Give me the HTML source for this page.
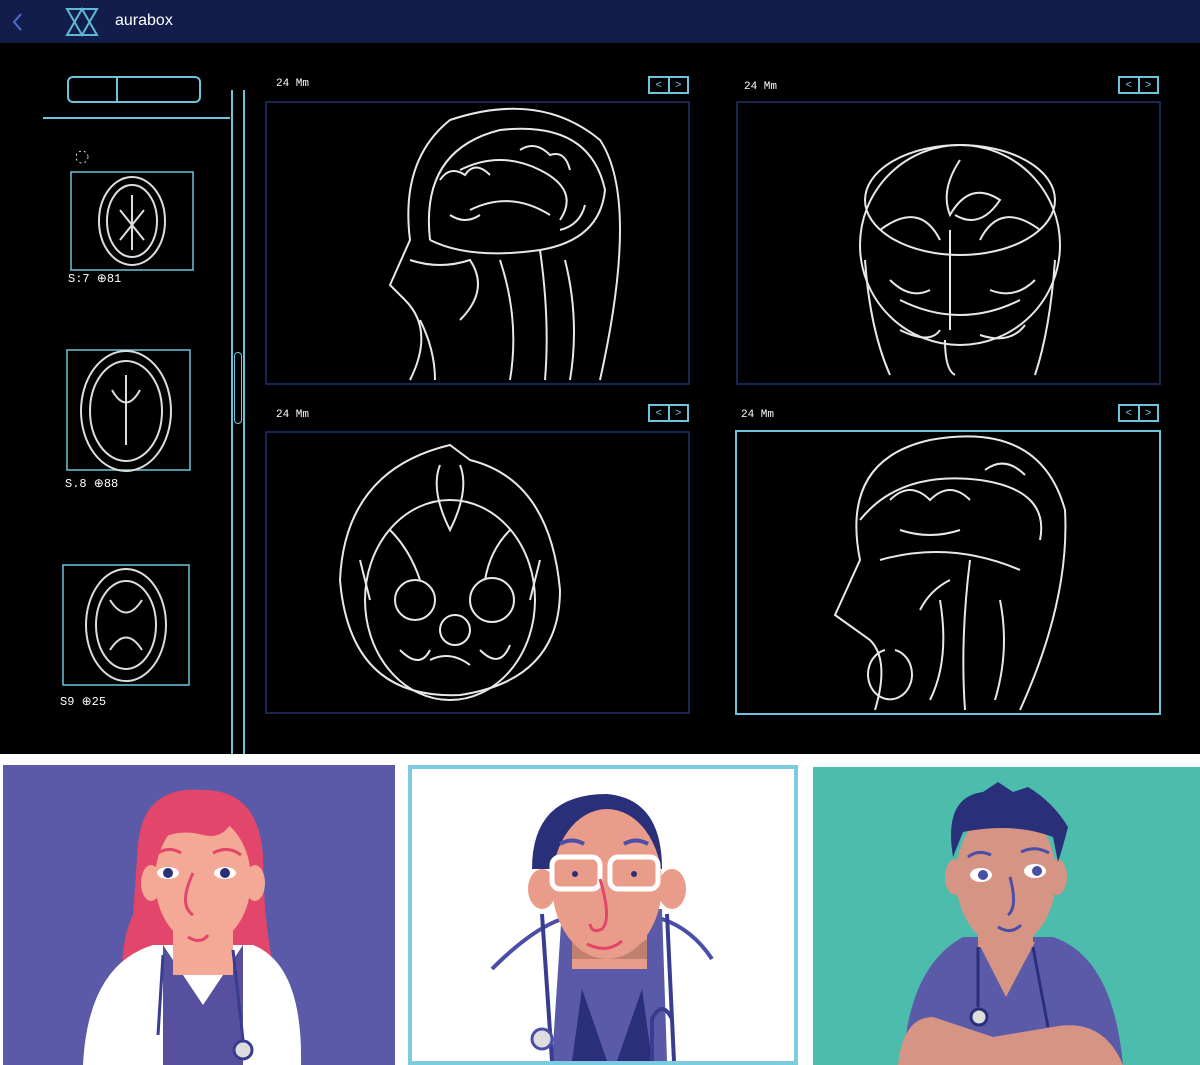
<!DOCTYPE html>
<html><head><meta charset="utf-8"><style>
*{margin:0;padding:0;box-sizing:border-box}
body{width:1200px;height:1065px;background:#fff;position:relative;overflow:hidden;font-family:"Liberation Sans",sans-serif}
.hdr{position:absolute;left:0;top:0;width:1200px;height:43px;background:#121d4c}
.dark{position:absolute;left:0;top:43px;width:1200px;height:711px;background:#000}
.abs{position:absolute}
.frame{position:absolute;border:2px solid #1a2550}
.lbl{position:absolute;color:#fff;font-size:11px;font-family:"Liberation Mono",monospace}
.nav{position:absolute;width:41px;height:18px;border:2px solid #6ec4dc;display:flex}
.nav span{flex:1;color:#6ec4dc;font-size:11px;line-height:14px;text-align:center}
.nav span:first-child{border-right:2px solid #6ec4dc}
</style></head><body>
<div class="hdr">
<svg class="abs" style="left:10px;top:11px" width="14" height="22"><path d="M11 3 L4 11 L11 19" stroke="#4a6fd0" stroke-width="2" fill="none"/></svg>
<svg class="abs" style="left:64px;top:7px" width="36" height="30"><g stroke="#5fb8d6" stroke-width="2" fill="none"><path d="M3 2 H33 L18 28 Z"/><path d="M3 28 H33 L18 2 Z"/></g></svg>
<div class="abs" style="left:115px;top:12px;color:#fff;font-size:16px">aurabox</div>
</div>
<div class="dark"></div>
<!-- sidebar -->
<div class="abs" style="left:67px;top:76px;width:134px;height:27px;border:2px solid #6ec4dc;border-radius:6px"></div>
<div class="abs" style="left:116px;top:76px;width:2px;height:27px;background:#6ec4dc"></div>
<div class="abs" style="left:43px;top:117px;width:187px;height:2px;background:#6ec4dc"></div>
<div class="abs" style="left:231px;top:90px;width:2px;height:664px;background:#6ec4dc"></div>
<div class="abs" style="left:243px;top:90px;width:2px;height:664px;background:#6ec4dc"></div>
<div class="abs" style="left:234px;top:352px;width:8px;height:72px;border:1px solid #6ec4dc;border-radius:4px"></div>
<svg class="abs" style="left:60px;top:145px" width="150" height="570"><g fill="none" stroke="#6ec4dc" stroke-width="1.5">
<rect x="11" y="27" width="122" height="98"/><rect x="7" y="205" width="123" height="120"/><rect x="3" y="420" width="126" height="120"/></g>
<g fill="none" stroke="#ddd" stroke-width="2">
<ellipse cx="72" cy="76" rx="33" ry="44"/><ellipse cx="72" cy="76" rx="25" ry="36"/><path d="M72 50 V105 M60 65 L84 95 M84 65 L60 95"/>
<ellipse cx="66" cy="266" rx="45" ry="60"/><ellipse cx="66" cy="266" rx="36" ry="50"/><path d="M66 230 V300 M52 245 Q66 270 80 245"/>
<ellipse cx="66" cy="480" rx="40" ry="56"/><ellipse cx="66" cy="480" rx="30" ry="44"/><path d="M50 455 Q66 480 82 455 M50 505 Q66 480 82 505"/>
</g>
<text x="8" y="137" fill="#fff" font-size="12" font-family="Liberation Mono">S:7 ⊕81</text>
<text x="5" y="342" fill="#fff" font-size="12" font-family="Liberation Mono">S.8 ⊕88</text>
<text x="0" y="560" fill="#fff" font-size="12" font-family="Liberation Mono">S9 ⊕25</text>
<circle cx="22" cy="12" r="6" fill="none" stroke="#ddd" stroke-dasharray="2 3"/>
</svg>
<!-- frames -->
<div class="lbl" style="left:276px;top:78px">24 Mm</div><div class="nav" style="left:648px;top:76px"><span>&lt;</span><span>&gt;</span></div>
<div class="lbl" style="left:744px;top:81px">24 Mm</div><div class="nav" style="left:1118px;top:76px"><span>&lt;</span><span>&gt;</span></div>
<div class="lbl" style="left:276px;top:409px">24 Mm</div><div class="nav" style="left:648px;top:404px"><span>&lt;</span><span>&gt;</span></div>
<div class="lbl" style="left:741px;top:409px">24 Mm</div><div class="nav" style="left:1118px;top:404px"><span>&lt;</span><span>&gt;</span></div>
<div class="frame" style="left:265px;top:101px;width:425px;height:284px"></div>
<div class="frame" style="left:736px;top:101px;width:425px;height:284px"></div>
<div class="frame" style="left:265px;top:431px;width:425px;height:283px"></div>
<div class="frame" style="left:735px;top:430px;width:426px;height:285px;border-color:#6ec4dc"></div>
<svg class="abs" style="left:0;top:0" width="1200" height="754"><g fill="none" stroke="#e8e8e8" stroke-width="2">
<path d="M410 380 Q435 330 405 300 L390 285 L410 240 Q400 160 450 120 Q540 90 600 140 Q640 200 600 380"/>
<path d="M430 240 Q420 150 500 130 Q590 120 605 190 Q600 240 540 250 Q470 260 430 240"/>
<path d="M460 170 Q500 150 540 170 Q580 190 560 220 M470 210 Q510 190 550 215 M500 260 Q520 320 510 380 M540 250 Q550 320 545 380"/>
<path d="M440 180 q10 -15 25 -5 q10 -15 25 0 M520 150 q15 -10 30 5 q15 -5 20 15 M450 215 q15 10 30 0 M560 230 q20 -5 25 -25 M410 260 q30 10 60 0 q20 30 -10 60 M420 320 q15 30 15 60 M565 260 q15 60 5 120"/>
<ellipse cx="960" cy="245" rx="100" ry="100"/><path d="M865 260 Q870 330 890 375 M1055 260 Q1050 330 1035 375 M960 160 Q940 190 950 215 Q970 180 1000 200 Q980 230 955 215 M950 230 V330 M900 300 Q960 330 1020 300 M880 230 Q920 200 940 240 M1040 230 Q1000 200 980 240"/>
<ellipse cx="960" cy="200" rx="95" ry="55"/>
<path d="M890 280 q20 20 40 10 M990 290 q25 10 45 -10 M900 330 q30 15 40 0 M980 335 q30 10 45 -10 M945 340 q0 30 10 35"/>
<path d="M450 445 L470 460 Q550 480 560 590 Q560 680 460 695 Q350 700 340 580 Q345 470 450 445 Z"/>
<ellipse cx="450" cy="600" rx="85" ry="100"/>
<path d="M440 465 Q430 490 450 530 Q470 490 460 465 M395 600 a20 20 0 1 0 40 0 a20 20 0 1 0 -40 0 M470 600 a22 22 0 1 0 44 0 a22 22 0 1 0 -44 0 M440 630 a15 15 0 1 0 30 0 a15 15 0 1 0 -30 0 M430 660 Q450 650 470 665"/>
<path d="M390 530 q20 20 30 50 M510 530 q-20 20 -25 50 M400 650 q20 20 30 0 M480 650 q20 20 30 -5 M360 560 l10 40 M540 560 l-10 40"/>
<path d="M875 710 Q890 660 870 640 L835 615 L860 560 Q840 460 930 440 Q1040 420 1065 510 Q1070 600 1020 710"/>
<path d="M860 520 Q900 470 980 480 Q1050 490 1040 540 M880 560 Q950 540 1020 570 M970 560 Q960 640 965 710 M940 600 Q950 660 930 700 M885 650 a22 25 0 1 0 10 0"/>
<path d="M890 500 q20 -20 40 0 q20 -20 40 0 M985 470 q20 -15 40 5 M900 530 q30 10 60 0 M1000 600 q10 50 -5 100 M950 580 q-20 10 -30 30"/>
</g></svg>
<!-- doctors -->
<svg class="abs" style="left:3px;top:765px" width="392" height="300">
<rect width="392" height="300" fill="#5a5aa8"/>
<path d="M135 80 Q140 20 200 25 Q255 25 260 90 Q260 150 270 200 L265 240 L120 240 Q115 180 130 150 Z" fill="#e2466a"/>
<path d="M80 300 Q85 200 150 180 L250 180 Q300 200 298 300 Z" fill="#fff"/>
<path d="M160 180 L200 240 L240 180 L240 300 L160 300 Z" fill="#56509e"/>
<rect x="170" y="150" width="60" height="60" fill="#f4a896"/>
<ellipse cx="200" cy="115" rx="48" ry="65" fill="#f4a896"/>
<ellipse cx="148" cy="118" rx="10" ry="18" fill="#f4a896"/><ellipse cx="252" cy="118" rx="10" ry="18" fill="#f4a896"/>
<path d="M150 60 Q180 40 230 55 Q220 75 200 70 Q170 62 150 80Z" fill="#e2466a"/>
<ellipse cx="165" cy="108" rx="11" ry="6" fill="#fff"/><circle cx="165" cy="108" r="5" fill="#2a2f7a"/>
<ellipse cx="222" cy="108" rx="11" ry="6" fill="#fff"/><circle cx="222" cy="108" r="5" fill="#2a2f7a"/>
<path d="M190 108 Q175 140 190 150 M185 172 Q198 180 205 170 M152 90 Q165 80 178 88 M210 88 Q225 80 238 90" stroke="#e2466a" stroke-width="3" fill="none"/>
<path d="M160 190 L155 270 M230 185 L240 275" stroke="#3a3d8f" stroke-width="3" fill="none"/>
<circle cx="240" cy="285" r="9" fill="#ddd" stroke="#3a3d8f" stroke-width="3"/>
</svg>
<div class="abs" style="left:408px;top:765px;width:390px;height:300px;border:4px solid #7ccbe0;background:#fff;overflow:hidden">
<svg width="382" height="292" style="position:absolute;left:0;top:0">
<path d="M80 200 Q120 160 150 150 L250 150 Q280 160 300 190" stroke="#4a4ea6" stroke-width="4" fill="none"/>
<path d="M150 140 L250 140 L255 292 L140 292 Z" fill="#5a5aa8"/>
<path d="M170 220 L195 292 L160 292 Z M230 220 L205 292 L240 292Z" fill="#2a2f7a"/>
<path d="M130 145 L140 292 M255 145 L260 250" stroke="#3a3d8f" stroke-width="4" fill="none"/>
<rect x="160" y="130" width="75" height="70" fill="#e99c8a"/>
<path d="M160 170 Q195 200 235 170 L235 190 L160 190Z" fill="#c08070"/>
<path d="M120 100 Q120 25 195 25 Q250 30 250 100 Z" fill="#2a2f7a"/>
<ellipse cx="195" cy="115" rx="55" ry="75" fill="#e99c8a"/>
<ellipse cx="130" cy="120" rx="14" ry="20" fill="#e99c8a"/><ellipse cx="260" cy="120" rx="14" ry="20" fill="#e99c8a"/>
<rect x="140" y="88" width="48" height="32" rx="8" fill="none" stroke="#fff" stroke-width="5"/>
<rect x="198" y="88" width="48" height="32" rx="8" fill="none" stroke="#fff" stroke-width="5"/>
<circle cx="163" cy="105" r="3" fill="#2a2f7a"/><circle cx="222" cy="105" r="3" fill="#2a2f7a"/>
<path d="M148 75 Q160 68 172 75 M212 75 Q224 68 236 75" stroke="#4a4ea6" stroke-width="4" fill="none"/>
<path d="M188 110 Q200 150 190 160 Q180 165 178 155 M175 175 Q195 185 210 172" stroke="#e2466a" stroke-width="3" fill="none"/>
<path d="M240 292 L240 250 Q250 230 260 250 L262 292" stroke="#3a3d8f" stroke-width="4" fill="none"/>
<circle cx="130" cy="270" r="10" fill="#ddd" stroke="#4a4ea6" stroke-width="3"/>
</svg></div>
<svg class="abs" style="left:813px;top:767px" width="387" height="298">
<rect width="387" height="298" fill="#4cbdac"/>
<path d="M90 298 Q95 200 150 170 L240 170 Q300 190 310 298 Z" fill="#5a5aa8"/>
<path d="M85 298 Q90 250 120 250 L180 270 L240 260 Q290 250 310 298 Z" fill="#d69584"/>
<rect x="165" y="130" width="55" height="50" fill="#d69584"/>
<path d="M165 175 L193 230 L222 175 Z" fill="#d69584"/>
<ellipse cx="193" cy="110" rx="50" ry="70" fill="#d69584"/>
<ellipse cx="142" cy="110" rx="10" ry="18" fill="#d69584"/><ellipse cx="244" cy="110" rx="10" ry="18" fill="#d69584"/>
<path d="M140 90 Q130 30 170 25 L185 15 L200 25 L215 20 Q240 35 255 60 Q250 80 245 95 L240 70 Q200 55 150 65 Z" fill="#2a2f7a"/>
<ellipse cx="168" cy="108" rx="11" ry="7" fill="#fff"/><circle cx="170" cy="108" r="5" fill="#4a4ea6"/>
<ellipse cx="222" cy="104" rx="11" ry="7" fill="#fff"/><circle cx="224" cy="104" r="5" fill="#4a4ea6"/>
<path d="M155 90 Q165 82 178 88 M208 85 Q222 78 236 86 M197 110 Q205 140 195 148 M185 160 Q198 168 208 158" stroke="#4a4ea6" stroke-width="3" fill="none"/>
<path d="M165 180 L165 240 M220 180 L235 260" stroke="#2a2f7a" stroke-width="3" fill="none"/>
<circle cx="166" cy="250" r="8" fill="#ddd" stroke="#2a2f7a" stroke-width="3"/>
</svg>
</body></html>
